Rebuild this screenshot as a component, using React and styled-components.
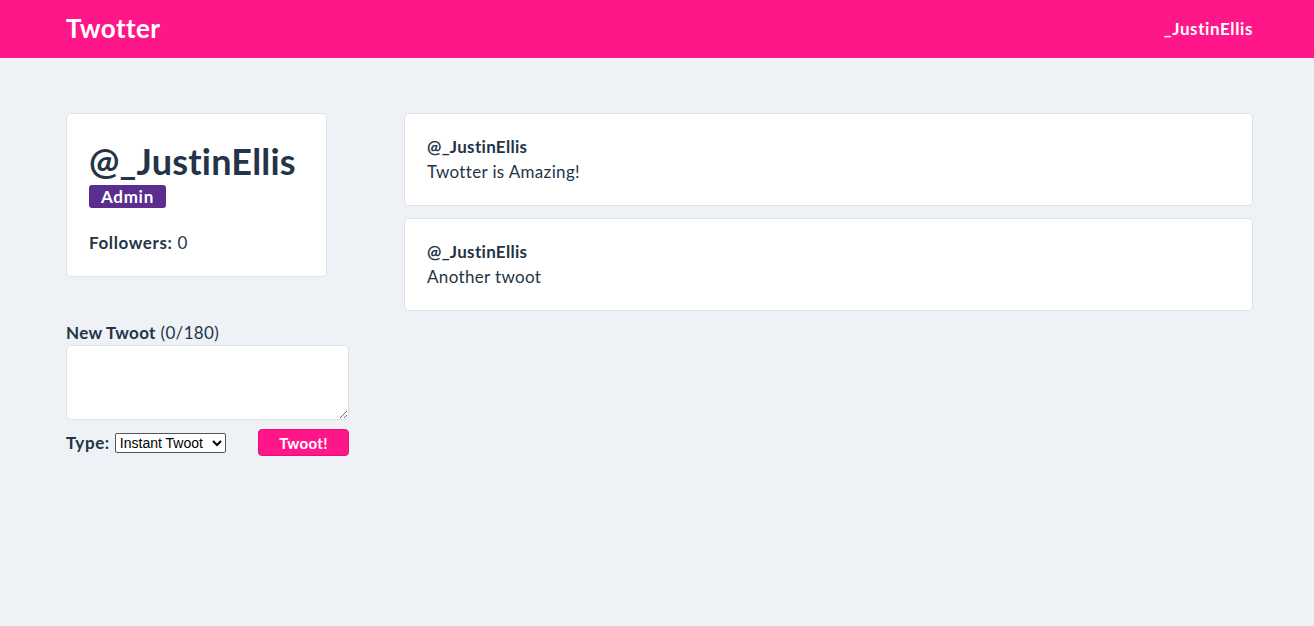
import React, { useState } from "react";
import styled, { createGlobalStyle } from "styled-components";

const GlobalStyle = createGlobalStyle`
  body {
    margin: 0;
    background: #eef1f6;
    font-family: Lato, "Noto Sans", sans-serif;
    color: #243447;
  }
`;

const App = () => {
  const [text, setText] = useState("");
  const twoots = [
    { id: 1, author: "_JustinEllis", content: "Twotter is Amazing!" },
    { id: 2, author: "_JustinEllis", content: "Another twoot" },
  ];

  return (
    <>
      <GlobalStyle />
      <Nav>
        <Logo>Twotter</Logo>
        <NavUser>_JustinEllis</NavUser>
      </Nav>
      <Main>
        <Sidebar>
          <ProfileCard>
            <Username>@_JustinEllis</Username>
            <Badge>Admin</Badge>
            <Followers>
              <strong>Followers:</strong> 0
            </Followers>
          </ProfileCard>
          <Form>
            <Label>
              <strong>New Twoot</strong> ({text.length}/180)
            </Label>
            <TextArea
              rows="4"
              value={text}
              onChange={(e) => setText(e.target.value)}
            />
            <FormRow>
              <TypeLabel>
                <strong>Type:</strong>
                <Select defaultValue="instant">
                  <option value="draft">Draft</option>
                  <option value="instant">Instant Twoot</option>
                </Select>
              </TypeLabel>
              <Button>Twoot!</Button>
            </FormRow>
          </Form>
        </Sidebar>
        <Feed>
          {twoots.map((twoot) => (
            <TwootItem key={twoot.id} {...twoot} />
          ))}
        </Feed>
      </Main>
    </>
  );
};

// Components
const TwootItem = ({ author, content }) => (
  <TwootCard>
    <TwootAuthor>@{author}</TwootAuthor>
    <TwootText>{content}</TwootText>
  </TwootCard>
);

// Styled components
const Nav = styled.nav`
  height: 58px;
  background: #ff1688;
  display: flex;
  align-items: center;
  justify-content: space-between;
  padding: 0 61px 0 66px;
  color: white;
`;
const Logo = styled.div`
  font-size: 26px;
  font-weight: 700;
  letter-spacing: 0.4px;
  margin-bottom: 3px;
`;
const NavUser = styled.div`
  font-size: 17px;
  font-weight: 700;
  letter-spacing: 0.6px;
  margin-bottom: 1px;
`;
const Main = styled.main`
  display: grid;
  grid-template-columns: 283px 1fr;
  gap: 55px;
  padding: 55px 61px 0 66px;
  align-items: start;
`;
const Sidebar = styled.div`
  display: flex;
  flex-direction: column;
  gap: 45px;
`;
const Card = styled.div`
  background: white;
  border: 1px solid #dde1e8;
  border-radius: 5px;
  box-sizing: border-box;
`;
const ProfileCard = styled(Card)`
  width: 261px;
  height: 164px;
  padding: 24px 22px;
`;
const Username = styled.h1`
  margin: 0;
  font-size: 36px;
  font-weight: 700;
  line-height: 47px;
  letter-spacing: 0.2px;
`;
const Badge = styled.span`
  display: inline-block;
  background: #5b2d8f;
  color: white;
  font-size: 17px;
  font-weight: 700;
  line-height: 23px;
  padding: 0 12px;
  border-radius: 3px;
  letter-spacing: 0.7px;
`;
const Followers = styled.p`
  margin: 24px 0 0;
  font-size: 17px;
  letter-spacing: 0.6px;
  strong {
    font-weight: 700;
  }
`;
const Form = styled.form`
  display: flex;
  flex-direction: column;
`;
const Label = styled.label`
  font-size: 17px;
  line-height: 22px;
  margin-bottom: 1px;
  letter-spacing: 0.35px;
  strong {
    font-weight: 700;
  }
`;
const TextArea = styled.textarea`
  height: 75px;
  box-sizing: border-box;
  border: 1px solid #dde1e8;
  border-radius: 5px;
  background: white;
`;
const FormRow = styled.div`
  display: flex;
  justify-content: space-between;
  align-items: center;
  margin-top: 9px;
`;
const TypeLabel = styled.label`
  display: flex;
  align-items: center;
  gap: 5px;
  font-size: 17px;
  letter-spacing: 0.6px;
  strong {
    font-weight: 700;
  }
`;
const Select = styled.select`
  font-family: "Liberation Sans", Arial, sans-serif;
  font-size: 14px;
  letter-spacing: 0;
  height: 20px;
  width: 111px;
  color: black;
  background: white;
  border: 1px solid #555;
  border-radius: 2px;
`;
const Button = styled.button`
  width: 91px;
  height: 27px;
  background: #ff1688;
  color: white;
  border: 1px solid #e5107a;
  border-radius: 4px;
  font-family: Lato, sans-serif;
  font-size: 15px;
  font-weight: 700;
  letter-spacing: 0.3px;
  cursor: pointer;
`;
const Feed = styled.div`
  display: flex;
  flex-direction: column;
  gap: 12px;
`;
const TwootCard = styled(Card)`
  height: 93px;
  padding: 23px 22px;
`;
const TwootAuthor = styled.div`
  font-size: 17px;
  font-weight: 700;
  line-height: 20px;
  letter-spacing: 0.3px;
`;
const TwootText = styled.div`
  margin-top: 3px;
  font-size: 17px;
  line-height: 24px;
  letter-spacing: 0.35px;
`;

export default App;
